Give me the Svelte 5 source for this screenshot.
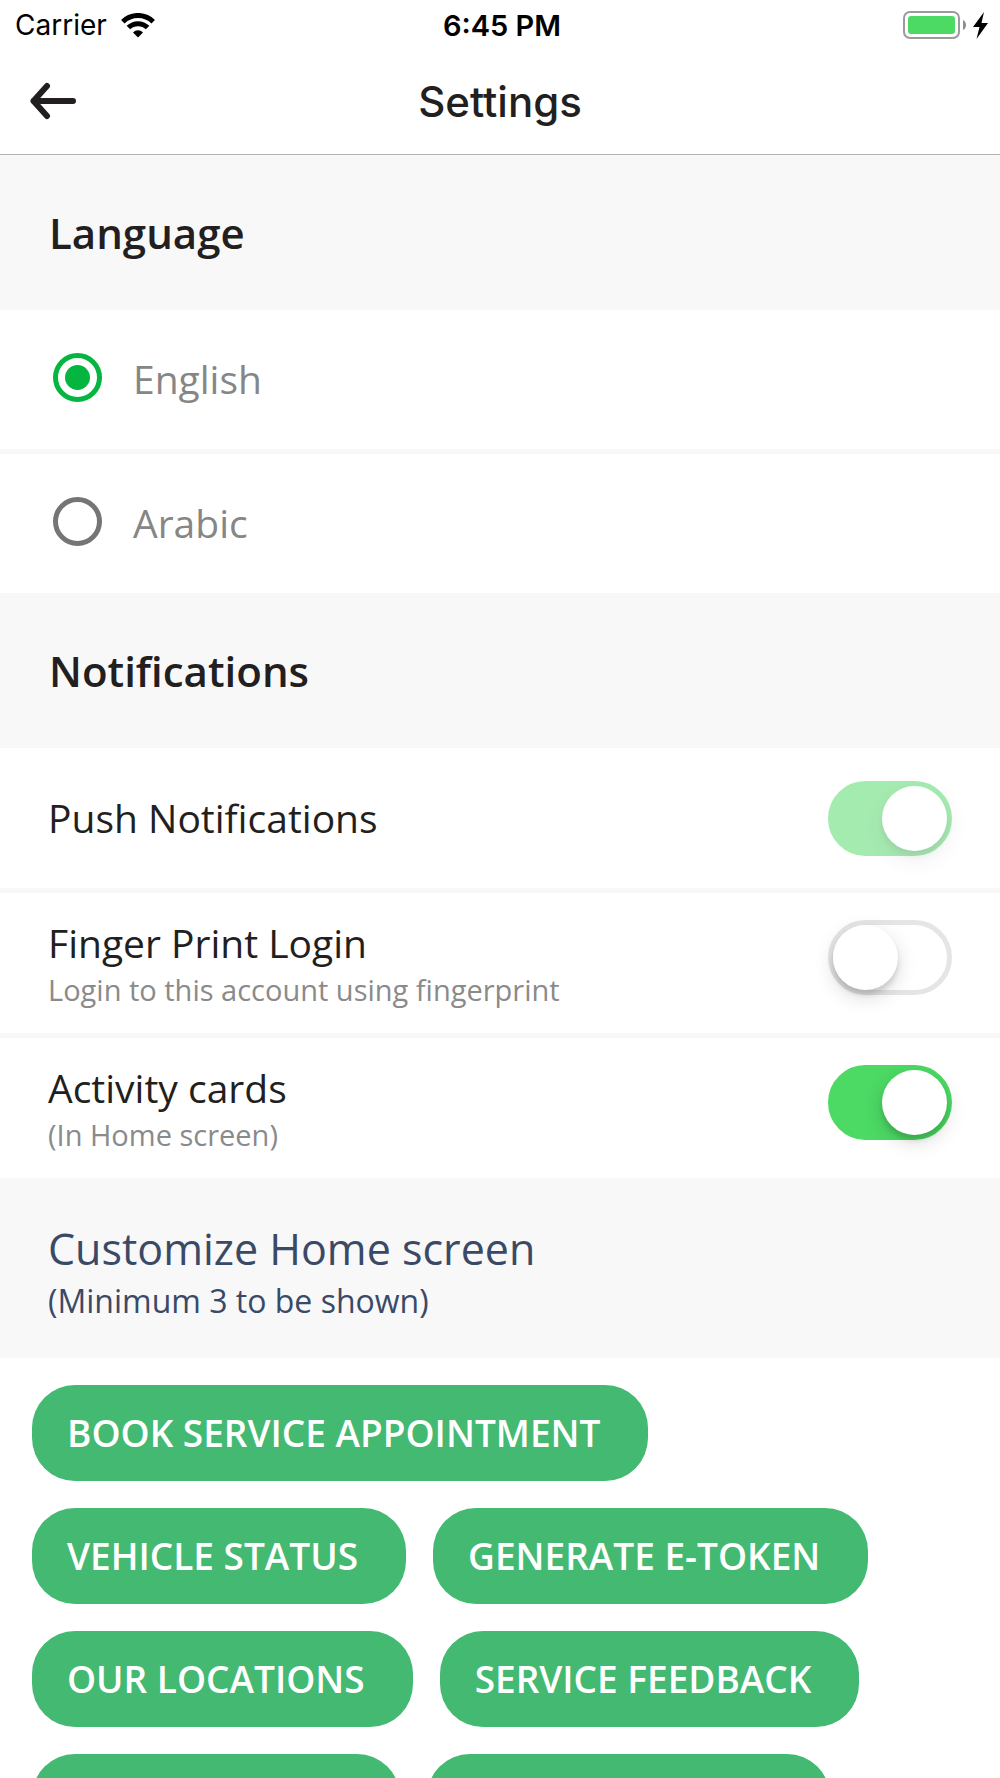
<script lang="ts">
  /**
   * Settings screen: language choice, notification switches
   * and the shortcuts shown on the home screen
   */

  interface Toggle {
    id: string;
    title: string;
    detail?: string;
    on: boolean;
    disabled?: boolean;
  }

  const languages = ['English', 'Arabic'];

  let language = $state('English');

  let toggles = $state<Toggle[]>([
    { id: 'push', title: 'Push Notifications', on: true, disabled: true },
    {
      id: 'fingerprint',
      title: 'Finger Print Login',
      detail: 'Login to this account using fingerprint',
      on: false,
    },
    { id: 'activity', title: 'Activity cards', detail: '(In Home screen)', on: true },
  ]);

  let shortcuts = $state([
    { label: 'BOOK SERVICE APPOINTMENT', shown: true },
    { label: 'VEHICLE STATUS', shown: true },
    { label: 'GENERATE E-TOKEN', shown: true },
    { label: 'OUR LOCATIONS', shown: true },
    { label: 'SERVICE FEEDBACK', shown: true },
    { label: 'OFFERS & NEWS', shown: true },
    { label: 'SERVICE RECORDS', shown: true },
  ]);

  let shownCount = $derived(shortcuts.filter((s) => s.shown).length);

  // At least three shortcuts stay on the home screen
  function toggleShortcut(shortcut: { shown: boolean }) {
    if (shortcut.shown && shownCount <= 3) return;
    shortcut.shown = !shortcut.shown;
  }
</script>

<div class="screen">
  <div class="status-bar">
    <div class="carrier">
      <span>Carrier</span>
      <svg width="34" height="25" viewBox="0 0 34 25" aria-hidden="true">
        <g fill="none" stroke="#000" stroke-width="5">
          <path d="M1.8 8.7a21.6 21.6 0 0 1 30.4 0" />
          <path d="M7.4 14.6a13.6 13.6 0 0 1 19.2 0" />
        </g>
        <path d="M17 24.4l-5-5a7.1 7.1 0 0 1 10 0z" />
      </svg>
    </div>
    <span class="time">6:45 PM</span>
    <div class="battery">
      <svg width="86" height="28" viewBox="0 0 86 28" aria-hidden="true">
        <rect x="1" y="1" width="55" height="26" rx="6" fill="none" stroke="#9b9b9b" stroke-width="2" />
        <rect x="5" y="5" width="47" height="18" rx="3" fill="#4cd964" />
        <path d="M60 9q3 1.5 3 5t-3 5z" fill="#8e8e8e" />
        <path d="M81 1L70 16h6.500l-3 12L85 12h-6.500z" />
      </svg>
    </div>
  </div>

  <header>
    <button class="back" aria-label="Back">
      <svg width="46" height="38" viewBox="0 0 46 38" fill="none" stroke="#231f20" stroke-width="6" stroke-linecap="round" stroke-linejoin="round" aria-hidden="true">
        <path d="M43 19H3.500M17 4L3.500 19L17 34" />
      </svg>
    </button>
    <h1>Settings</h1>
  </header>

  <main>
    <h2 class="section-title" id="language">Language</h2>
    <div class="rows" role="radiogroup" aria-labelledby="language">
      {#each languages as name}
        <label class="row language">
          <input class="radio" type="radio" name="language" value={name} bind:group={language} />
          <span>{name}</span>
        </label>
      {/each}
    </div>

    <h2 class="section-title">Notifications</h2>
    <div class="rows">
      {#each toggles as toggle (toggle.id)}
        <div class="row" class:detailed={toggle.detail}>
          <label for={toggle.id}>
            <span class="title">{toggle.title}</span>
            {#if toggle.detail}
              <span class="detail">{toggle.detail}</span>
            {/if}
          </label>
          <input
            class="switch"
            type="checkbox"
            role="switch"
            id={toggle.id}
            disabled={toggle.disabled}
            bind:checked={toggle.on}
          />
        </div>
      {/each}
    </div>

    <div class="customize">
      <h2>Customize Home screen</h2>
      <p>(Minimum 3 to be shown)</p>
    </div>
    <div class="shortcuts">
      {#each shortcuts as shortcut}
        <button
          class="pill"
          class:off={!shortcut.shown}
          aria-pressed={shortcut.shown}
          onclick={() => toggleShortcut(shortcut)}
        >
          {shortcut.label}
        </button>
      {/each}
    </div>
  </main>
</div>

<style>
  :global(body) {
    margin: 0;
    background: #ffffff;
  }

  .screen {
    display: flex;
    flex-direction: column;
    height: 100vh;
    overflow: hidden;
    background: #ffffff;
    color: #231f20;
    font-family: 'Open Sans', 'Noto Sans', sans-serif;
  }

  h1,
  h2,
  p {
    margin: 0;
  }

  /* Status bar */
  .status-bar {
    display: grid;
    grid-template-columns: 1fr auto 1fr;
    align-items: center;
    flex-shrink: 0;
    height: 50px;
    padding: 0 11px 0 15px;
    color: #000000;
    font-family: Inter, Roboto, sans-serif;
    font-size: 28px;
  }

  .carrier {
    display: flex;
    align-items: center;
    gap: 14px;
  }

  .time {
    font-size: 29px;
    font-weight: 600;
  }

  .battery {
    display: flex;
    justify-content: flex-end;
  }

  /* Navigation header */
  header {
    display: grid;
    grid-template-columns: 1fr auto 1fr;
    align-items: center;
    flex-shrink: 0;
    height: 102px;
    padding: 0 30px 2px;
    border-bottom: 1px solid #b2b2b2;
  }

  h1 {
    font-family: Inter, Roboto, sans-serif;
    font-size: 42px;
    font-weight: 500;
  }

  .back {
    display: flex;
    justify-self: start;
    padding: 0;
    border: 0;
    background: none;
    cursor: pointer;
  }

  main {
    flex: 1;
    min-height: 0;
    overflow-y: auto;
    scrollbar-width: none;
  }

  /* Section headings */
  .section-title {
    padding: 48px 49px;
    background: #f8f8f8;
    font-size: 42px;
    font-weight: 600;
    line-height: 59px;
  }

  .customize {
    padding: 42px 48px 34px;
    background: #f8f8f8;
    color: #3a4a66;
  }

  .customize h2 {
    font-size: 43px;
    font-weight: 400;
    line-height: 58px;
  }

  .customize p {
    font-size: 32px;
    line-height: 46px;
  }

  /* List rows */
  .rows {
    display: flex;
    flex-direction: column;
    gap: 5px;
    background: #f8f8f8;
  }

  .row {
    display: flex;
    align-items: center;
    justify-content: space-between;
    min-height: 140px;
    padding: 0 48px;
    background: #ffffff;
    font-size: 39px;
    line-height: 54px;
  }

  .row.language {
    justify-content: flex-start;
    gap: 31px;
    box-sizing: border-box;
    min-height: 139px;
    padding-bottom: 2px;
    padding-left: 53px;
    color: #868686;
  }

  .title,
  .detail {
    display: block;
  }

  .detail {
    color: #8a8a8a;
    font-size: 29px;
    line-height: 40px;
  }

  .radio {
    display: grid;
    place-items: center;
    box-sizing: border-box;
    width: 49px;
    height: 49px;
    margin: 0 0 3px;
    border: 5px solid #757575;
    border-radius: 50%;
    appearance: none;
  }

  .radio:checked {
    border-color: #04b53f;
  }

  .radio:checked::before {
    content: '';
    width: 25px;
    height: 25px;
    border-radius: 50%;
    background: #04b53f;
  }

  .switch {
    display: flex;
    flex-shrink: 0;
    box-sizing: border-box;
    width: 124px;
    height: 75px;
    margin: 0;
    border: 5px solid #e5e5e5;
    border-radius: 38px;
    background: #ffffff;
    appearance: none;
  }

  .switch::before {
    content: '';
    width: 65px;
    height: 65px;
    border-radius: 50%;
    background: #ffffff;
    box-shadow:
      0 7px 20px rgba(0, 0, 0, 0.15),
      0 5px 5px rgba(0, 0, 0, 0.12);
  }

  .switch:checked {
    justify-content: flex-end;
    border-color: #4cd964;
    background: #4cd964;
  }

  .switch:disabled {
    opacity: 0.5;
  }

  .detailed .switch {
    margin-bottom: 12px;
  }

  /* Home screen shortcuts */
  .shortcuts {
    display: flex;
    flex-wrap: wrap;
    gap: 27px;
    padding: 27px 32px;
  }

  .pill {
    height: 96px;
    padding: 0 48px 0 35px;
    border: 0;
    border-radius: 43px;
    background: #43b972;
    color: #ffffff;
    font-family: inherit;
    font-size: 37px;
    font-weight: 600;
    line-height: 40px;
    cursor: pointer;
  }

  .pill.off {
    background: #b5b5b5;
  }
</style>
